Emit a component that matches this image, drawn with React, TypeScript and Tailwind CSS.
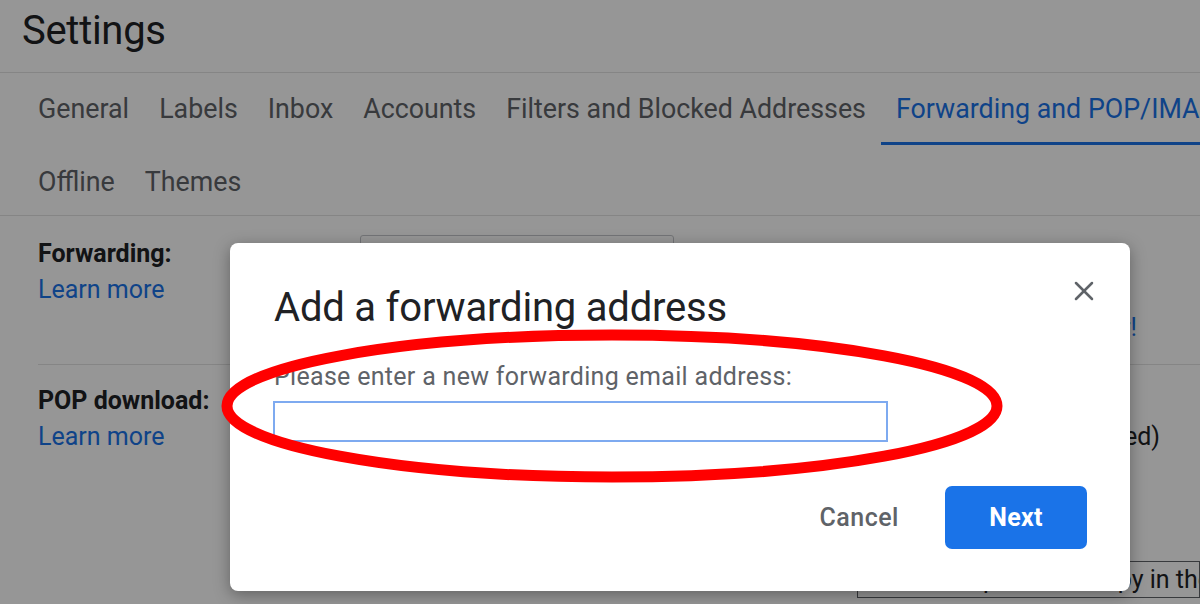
import { X } from 'lucide-react'

const tabsTop = ['General', 'Labels', 'Inbox', 'Accounts', 'Filters and Blocked Addresses']
const tabsBottom = ['Offline', 'Themes']

export default function App() {
  return (
    <div className="relative w-[1200px] h-[604px] overflow-hidden bg-white font-['Roboto',sans-serif] text-[#202124]">
      {/* page behind the dialog */}
      <div className="h-[73px] border-b border-[#e3e3e3] pl-[22px] pt-[7px]">
        <h1 className="text-[40px] leading-[48px] tracking-[-0.3px]">Settings</h1>
      </div>

      <div className="text-[26.8px] text-[#5f6368]">
        <div className="flex h-[72px] whitespace-nowrap pl-[23px]">
          {tabsTop.map((t) => (
            <div key={t} className="flex items-center px-[15px] pt-[1px]">
              {t}
            </div>
          ))}
          <div className="flex items-center px-[15px] border-b-[3px] border-[#1a73e8] pt-[4px] text-[#1a73e8]">
            Forwarding and POP/IMAP
          </div>
          <div className="flex items-center px-[15px]">Add-ons</div>
        </div>
        <div className="flex h-[71px] border-b border-[#e3e3e3] pl-[23px]">
          {tabsBottom.map((t) => (
            <div key={t} className="flex items-center px-[15px] pt-[5px]">
              {t}
            </div>
          ))}
        </div>
      </div>

      <div className="pl-[38px] text-[25px] leading-[36px]">
        <div className="flex h-[149px] border-b border-[#e3e3e3] pt-[20px]">
          <div className="w-[322px] shrink-0">
            <div className="font-bold">Forwarding:</div>
            <div className="text-[#1a73e8]">Learn more</div>
          </div>
          <div className="flex-1 min-w-0 -mt-[1px]">
            <div className="w-[314px] h-[42px] border border-[#c4c6ca] rounded-[3px]" />
            <div className="mt-[33px] flex justify-end pr-[63px] whitespace-nowrap">
              <span>
                You can also forward only some of your mail by{' '}
                <span className="text-[#1a73e8]">creating a filter!</span>
              </span>
            </div>
          </div>
        </div>

        <div className="flex pt-[18px]">
          <div className="w-[322px] shrink-0">
            <div className="font-bold">POP download:</div>
            <div className="text-[#1a73e8]">Learn more</div>
          </div>
          <div className="flex-1 min-w-0">
            <div>1. Status: POP is disabled</div>
            <div className="flex justify-end pr-[40px] whitespace-nowrap">
              Enable POP for all mail (even mail already downloaded)
            </div>
            <div>Enable POP for mail that arrives from now on</div>
            <div>Disable POP</div>
            <div className="mt-[34px] ml-[497px] h-[37px] overflow-hidden border border-[#5f6368] pl-[86px] whitespace-nowrap leading-[35px]">
              keep Gmail's copy in the Inbox
            </div>
          </div>
        </div>
      </div>

      {/* dimming overlay */}
      <div className="absolute inset-0 bg-black/[0.41]" />

      {/* dialog */}
      <div className="absolute left-[230px] top-[243px] w-[900px] h-[348px] rounded-[8px] bg-white shadow-[0_4px_16px_rgba(0,0,0,0.35)] px-[44px] pt-[41px]">
        <button className="absolute right-[30px] top-[32px] text-[#5f6368]">
          <X size={32} strokeWidth={1.9} />
        </button>
        <h2 className="text-[40px] leading-[48px] tracking-[-0.2px] text-[#202124]">Add a forwarding address</h2>
        <div className="mt-[31px] text-[25px] leading-[28px] tracking-[0.3px] text-[#5f6368]">
          Please enter a new forwarding email address:
        </div>
        <input className="mt-[10px] -ml-[1px] block w-[615px] h-[41px] border-2 border-[#7eaaf0] outline-none" />
        <div className="mt-[44px] flex justify-end items-center gap-[22px] -mr-[1px]">
          <button className="h-[63px] px-[24px] text-[25px] font-medium tracking-[0.5px] text-[#5f6368]">
            Cancel
          </button>
          <button className="h-[63px] w-[142px] rounded-[7px] bg-[#1a73e8] text-[25px] font-bold text-white tracking-[0.3px]">
            Next
          </button>
        </div>
      </div>

      {/* red highlight ring */}
      <svg className="absolute inset-0 pointer-events-none" width="1200" height="604">
        <ellipse cx="612" cy="406" rx="385" ry="71" fill="none" stroke="#ff0000" strokeWidth="11" />
      </svg>
    </div>
  )
}
